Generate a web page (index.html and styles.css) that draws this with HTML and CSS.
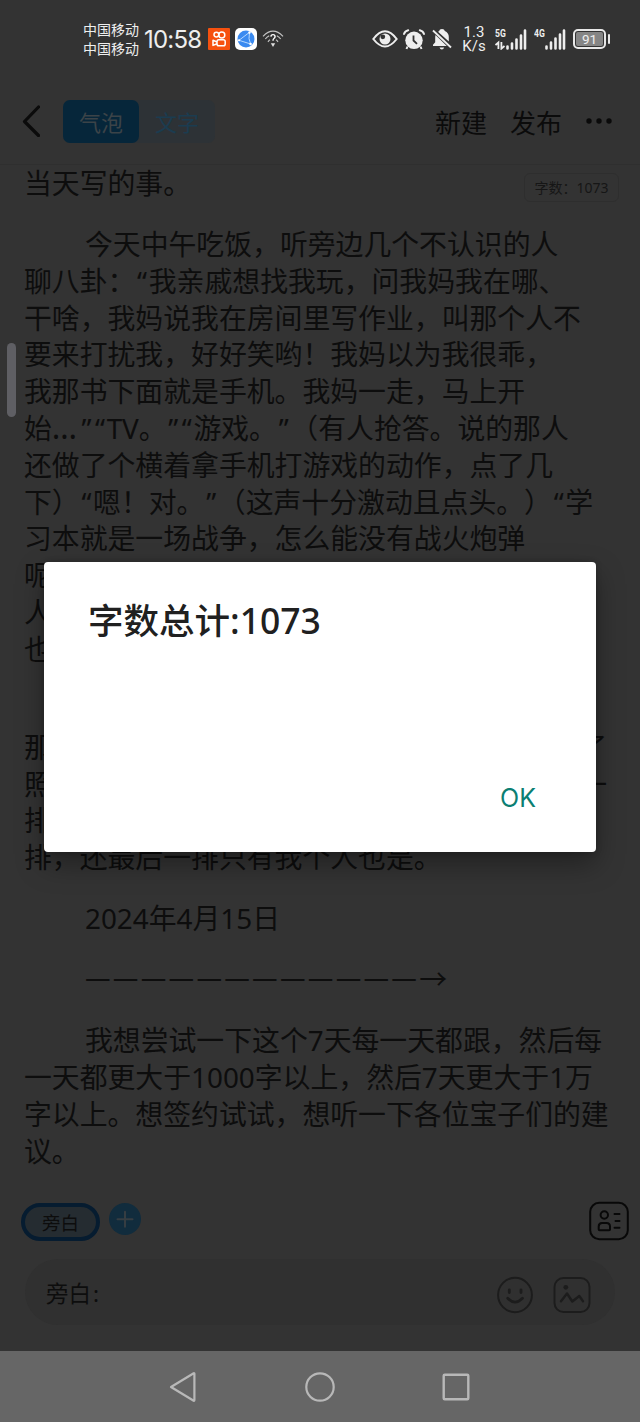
FILE: index.html
```html
<!DOCTYPE html>
<html lang="zh-CN">
<head>
<meta charset="utf-8">
<title>字数总计</title>
<link rel="stylesheet" href="styles.css">
</head>
<body>
<div class="screen">
  <header class="status">
    <div class="carriers"><span>中国移动</span><span>中国移动</span></div>
    <div class="clock">10:58</div>
    <svg class="app-kuai" width="22" height="22" viewBox="0 0 22 22"><rect width="22" height="22" rx="1" fill="#f6510f"/><g fill="none" stroke="#fff" stroke-width="1.5"><circle cx="8.4" cy="6.6" r="2.4"/><circle cx="13.8" cy="6.9" r="3"/><rect x="9" y="11.8" width="8.2" height="6" rx="1.8"/><path d="M9 14 L5 12.2 V17.4 L9 15.7" stroke-linejoin="round"/></g></svg>
    <svg class="app-browser" width="22" height="22" viewBox="0 0 22 22"><rect width="22" height="22" rx="5" fill="#fff"/><circle cx="11" cy="11" r="8.5" fill="#3a8af0"/><path d="M4 12.3 L14.5 4.3 M4 12.3 L15.6 16 M14.5 4.3 Q13 11 15.6 16" fill="none" stroke="#b5d8ff" stroke-width="1"/><circle cx="14.5" cy="4.5" r="1.2" fill="#fff"/><circle cx="4" cy="12.3" r="1.1" fill="#fff"/><circle cx="15.6" cy="16" r="1.3" fill="#fff"/></svg>
    <svg class="wifi" width="22" height="18" viewBox="0 0 22 18"><g fill="none" stroke="#c4c4c4" stroke-width="1.2"><path d="M1 6.3 Q11 -3.9 21 6.3"/><path d="M3.3 9 Q5 6.8 7.2 5.7 M14.8 5.7 Q17 6.8 18.7 9"/><path d="M6 11.8 Q6.8 10.6 8 9.8 M14 9.8 Q15.2 10.6 16 11.8"/><path d="M8.9 6.6 Q9 4.6 11 4.6 T13.1 6.6 Q13.1 7.8 11.9 8.5 Q11 9.1 11 10.8" stroke="#fff" stroke-width="1.4"/></g><path d="M8.8 13.2 H13.2 L11 17Z" fill="#e0e0e0"/></svg>
    <div class="spacer"></div>
    <svg class="eye" width="26" height="18" viewBox="0 0 26 18"><path d="M1.3 9 Q13 -6.5 24.7 9 Q13 24 1.3 9Z" fill="none" stroke="#eee" stroke-width="2"/><circle cx="13" cy="9" r="5.5" fill="#eee"/><circle cx="10.8" cy="6.8" r="2.4" fill="#333"/></svg>
    <svg class="alarm" width="22" height="21" viewBox="0 0 22 21"><circle cx="11" cy="11.3" r="8.7" fill="#eee"/><path d="M1 5 Q2 2 5.2 1.2 M21 5 Q20 2 16.8 1.2" stroke="#eee" stroke-width="2" fill="none" stroke-linecap="round"/><path d="M4.5 17.5 L3.5 20 M17.5 17.5 L18.5 20" stroke="#eee" stroke-width="2"/><path d="M10.5 6.5 V11.5 L14 14.8" fill="none" stroke="#333" stroke-width="1.8"/></svg>
    <svg class="mute" width="20" height="22" viewBox="0 0 20 22"><path d="M7 3.3 Q7.5 1 10 1 T12.8 3 Q16.8 4.8 16.8 9 V13.6 L6 3.8Z M3.5 7 L14.8 18 H1 V16.7 L3.2 14.3 V9Z" fill="#eee"/><path d="M1 2.5 L19 19.5" stroke="#eee" stroke-width="1.8"/><path d="M7.5 19.5 H12.2 Q11.5 21.5 9.8 21.5 T7.5 19.5Z" fill="#eee"/></svg>
    <div class="speed"><span>1.3</span><span>K/s</span></div>
    <div class="signal sig5"><span>5G</span><svg width="32" height="21" viewBox="0 0 32 21"><path d="M12.5 19.5v-2M17 19.5v-5M21.5 19.5v-9M26 19.5v-13M30 19.5v-18" stroke="#eee" stroke-width="2.6" stroke-linecap="round"/><path d="M.5 16 L3.4 13.5 V20 M6.4 13 V19.6 L9.5 17" fill="none" stroke="#eee" stroke-width="1.8"/></svg></div>
    <div class="signal sig4"><span>4G</span><svg width="32" height="21" viewBox="0 0 32 21"><path d="M12.5 19.5v-2M17 19.5v-6M21.5 19.5v-10M26 19.5v-14M30 19.5v-18" stroke="#eee" stroke-width="2.6" stroke-linecap="round"/></svg></div>
    <div class="battery"><span>91</span></div>
  </header>

  <nav class="toolbar">
    <svg class="back" width="18" height="32" viewBox="0 0 18 32"><path d="M16.5 2 L2.5 16.5 L16.5 30.5" fill="none" stroke="#0b0b0b" stroke-width="3.2" stroke-linecap="round" stroke-linejoin="round"/></svg>
    <div class="tabs"><span class="tab active">气泡</span><span class="tab">文字</span></div>
    <div class="spacer"></div>
    <span class="action">新建</span>
    <span class="action">发布</span>
    <svg class="more" width="28" height="8" viewBox="0 0 28 8"><g fill="#0a0a0a"><circle cx="4" cy="4" r="2.7"/><circle cx="14" cy="4" r="2.7"/><circle cx="24" cy="4" r="2.7"/></g></svg>
  </nav>

  <main class="article">
    <div class="count">字数：1073</div>
    <div class="para"><p>当天写的事。</p></div>
    <div class="para">
      <p class="indent">今天中午吃饭，听旁边几个不认识的人</p>
      <p>聊八卦：<q>“</q>我亲戚想找我玩，问我妈我在哪、</p>
      <p>干啥，我妈说我在房间里写作业，叫那个人不</p>
      <p>要来打扰我，好好笑哟！我妈以为我很乖，</p>
      <p>我那书下面就是手机。我妈一走，马上开</p>
      <p>始<i>…</i><q>”</q><q>“</q>TV。<q>”</q><q>“</q>游戏。<q>”</q>（有人抢答。说的那人</p>
      <p>还做了个横着拿手机打游戏的动作，点了几</p>
      <p>下）<q>“</q>嗯！对。<q>”</q>（这声十分激动且点头。）<q>“</q>学</p>
      <p>习本就是一场战争，怎么能没有战火炮弹</p>
      <p>呢</p>
      <p>人</p>
      <p>也</p>
    </div>
    <div class="para">
      <p>&nbsp;</p>
      <p class="ends"><span>那</span><span>了</span></p>
      <p class="ends"><span>照</span><span>一</span></p>
      <p>排</p>
      <p>排，还最后一排只有我个人也是。</p>
    </div>
    <div class="para"><p class="indent">2024年4月15日</p></div>
    <div class="para"><p class="indent"><span class="rule">一一一一一一一一一一一一</span>→</p></div>
    <div class="para">
      <p class="indent">我想尝试一下这个7天每一天都跟，然后每</p>
      <p>一天都更大于1000字以上，然后7天更大于1万</p>
      <p>字以上。想签约试试，想听一下各位宝子们的建</p>
      <p>议。</p>
    </div>
    <div class="thumb"></div>
  </main>

  <section class="composer">
    <div class="roles">
      <span class="role">旁白</span>
      <svg class="add" width="32" height="32" viewBox="0 0 32 32"><circle cx="16" cy="16" r="16" fill="#112c3d"/><path d="M8.5 16.3h15M16 8.8v15" stroke="#363d42" stroke-width="2" stroke-linecap="round"/></svg>
      <div class="spacer"></div>
      <svg class="card" width="40" height="40" viewBox="0 0 40 40"><g fill="none" stroke="#080808" stroke-width="2" stroke-linecap="round"><rect x="1.2" y="1.8" width="37.6" height="36.4" rx="9"/><circle cx="15.3" cy="14" r="3.7"/><path d="M9.7 28.5 V25.5 Q9.7 22 13 22 H17.5 Q21 22 21 25.5 V28.5 Q21 29.3 20 29.3 H10.7 Q9.7 29.3 9.7 28.5Z"/><path d="M25.5 13h5M26.5 20h4M25.5 26.7h5"/></g></svg>
    </div>
    <div class="input">
      <span class="prompt">旁白<b>:</b></span>
      <div class="spacer"></div>
      <svg width="36" height="38" viewBox="0 0 36 38"><g fill="none" stroke="#1c1c1c" stroke-width="2" stroke-linecap="round"><ellipse cx="18" cy="19" rx="16.9" ry="17.2"/><path d="M12.3 13.8v2.7M24 13.8v2.7" stroke-width="2.8"/><path d="M10.7 22.3 Q18 30 25.5 22.3" stroke-width="2.7"/></g></svg>
      <svg width="38" height="38" viewBox="0 0 38 38"><g fill="none" stroke="#1c1c1c" stroke-width="2" stroke-linecap="round" stroke-linejoin="round"><rect x="1.5" y="2" width="35" height="34" rx="9"/><path d="M8 25.3 L14 17.5 L19.3 25.5 L26.3 20 L30 25.3" stroke-width="2.4"/></g><circle cx="12.8" cy="11.3" r="2.4" fill="#1c1c1c"/></svg>
    </div>
  </section>

  <footer class="sysnav">
    <svg width="28" height="32" viewBox="0 0 28 32"><path d="M2 16 L24.7 2.3 Q25.4 2 25.4 3 V29 Q25.4 30 24.7 29.7Z" fill="none" stroke="#b8b8b8" stroke-width="2.2" stroke-linejoin="round"/></svg>
    <svg width="32" height="32" viewBox="0 0 32 32"><circle cx="16" cy="16" r="13.7" fill="none" stroke="#b8b8b8" stroke-width="2.2"/></svg>
    <svg width="28" height="32" viewBox="0 0 28 32"><rect x="1.7" y="3.7" width="24.6" height="24.6" rx="1" fill="none" stroke="#b8b8b8" stroke-width="2.4"/></svg>
  </footer>

  <div class="dialog">
    <h1>字数总计:1073</h1>
    <button class="ok">OK</button>
  </div>
</div>
</body>
</html>
```
FILE: styles.css
```css
* { box-sizing: border-box; }
body { margin: 0; background: #333; }
p, h1 { margin: 0; }
svg { display: block; flex: none; }
.spacer { flex: 1; }

.screen {
  position: relative;
  width: 640px;
  height: 1422px;
  overflow: hidden;
  background: #333;
  color: #0d0d0d;
  font-family: "Noto Sans", "Noto Sans CJK SC", sans-serif;
  text-spacing-trim: space-all;
  display: flex;
  flex-direction: column;
}

/* status bar */
.status {
  height: 78px;
  flex: none;
  display: flex;
  align-items: center;
  padding: 0 29px 0 83px;
  color: #eee;
}
.carriers { display: flex; flex-direction: column; width: 61px; font-size: 14px; line-height: 19px; white-space: nowrap; }
.clock { width: 64px; font-family: Inter, sans-serif; font-size: 24px; letter-spacing: -0.8px; line-height: 30px; white-space: nowrap; padding-top: 2px; }
.app-browser { margin-left: 5px; }
.wifi { margin-left: 5px; }
.alarm { margin-left: 5px; }
.mute { margin-left: 7px; }
.speed { display: flex; flex-direction: column; align-items: center; width: 24px; margin-left: 10px; font-family: Roboto, sans-serif; font-size: 15px; line-height: 14px; }
.signal { position: relative; }
.signal span { position: absolute; left: 0; top: -1px; font-family: Roboto, sans-serif; font-weight: 700; font-size: 11px; line-height: 11px; transform: scaleX(.78); transform-origin: left; }
.sig5 { margin-left: 9px; }
.sig4 { margin-left: 7px; }
.battery {
  position: relative;
  width: 33px;
  height: 20px;
  margin-left: 7px;
  margin-right: 5px;
  border: 2px solid #e8e8e8;
  border-radius: 5px;
  padding: 1px;
}
.battery span { display: block; height: 14px; border-radius: 2px; background: #858585; text-align: center; font-family: Roboto, sans-serif; font-size: 13.5px; line-height: 15px; }
.battery::after { content: ""; position: absolute; right: -6px; top: 3px; width: 2px; height: 10px; border-radius: 1px; background: #e8e8e8; }

/* toolbar */
.toolbar {
  height: 87px;
  flex: none;
  display: flex;
  align-items: center;
  padding: 0 27px 0 22px;
  border-bottom: 1px solid #2f2f2f;
}
.tabs { display: flex; margin-left: 23px; width: 152px; height: 43px; border-radius: 7px; background: #2d3236; }
.tab { width: 76px; border-radius: 7px; text-align: center; font-size: 22px; line-height: 44px; color: #1b3c50; }
.tab.active { background: #06263a; color: #3b4348; }
.action { font-size: 26px; line-height: 36px; margin: 3px 23px 0 0; color: #0b0b0b; }

/* story text */
.article { position: relative; height: 1015px; flex: none; padding-left: 24px; font-size: 27.85px; line-height: 36.8px; }
.para { margin-bottom: 24.3px; }
.para p { white-space: nowrap; height: 36.8px; }
.para .indent { padding-left: 61px; }
.para q { quotes: none; display: inline-block; width: 13.4px; text-align: center; }
.para i { display: inline-block; width: 28px; font-style: normal; font-size: 32px; line-height: 30px; }
.para .ends { display: flex; justify-content: space-between; width: 583px; }
.para .rule { font-size: 25.5px; letter-spacing: 2.35px; }
.count {
  position: absolute;
  left: 524px;
  top: 8px;
  width: 95px;
  height: 29px;
  border: 1px solid #2e2e2e;
  border-radius: 6px;
  text-align: center;
  font-size: 14px;
  line-height: 28px;
  color: #161616;
}
.thumb { position: absolute; left: 7px; top: 178px; width: 9px; height: 74px; border-radius: 5px; background: #5f5f64; }

/* composer */
.composer { height: 171px; flex: none; padding: 21px 11px 0 21px; }
.roles { display: flex; align-items: flex-start; height: 58px; }
.role { width: 79px; height: 38px; margin-top: 2px; border: 4px solid #061c30; border-radius: 20px; background: #252c31; text-align: center; font-size: 18.5px; line-height: 32px; }
.add { margin: 2px 0 0 9px; }
.input { display: flex; align-items: center; height: 66px; margin: 0 14px 0 4px; padding: 6px 24px 0 21px; border-radius: 33px; background: #303030; gap: 20px; }
.prompt { font-size: 22.5px; line-height: 30px; margin-top: -2px; }
.prompt b { font-weight: 400; margin-left: 2px; }

/* system navigation */
.sysnav { height: 71px; flex: none; background: #666; display: flex; justify-content: space-between; align-items: center; padding: 0 170px 0 169px; }

/* dialog */
.dialog {
  position: absolute;
  left: 44px;
  top: 562px;
  width: 552px;
  height: 290px;
  border-radius: 4px;
  background: #fff;
  box-shadow: 0 12px 28px rgba(0, 0, 0, .35), 0 0 6px rgba(0, 0, 0, .2);
  padding: 34px 44px;
  display: flex;
  flex-direction: column;
  justify-content: space-between;
}
.dialog h1 { font-size: 35.5px; line-height: 48px; font-weight: 500; color: #202020; }
.ok { align-self: flex-end; margin: 0 16px 4px 0; border: 0; padding: 0; background: none; color: #0b7f73; font-family: Inter, sans-serif; font-size: 25px; line-height: 32px; }
```
